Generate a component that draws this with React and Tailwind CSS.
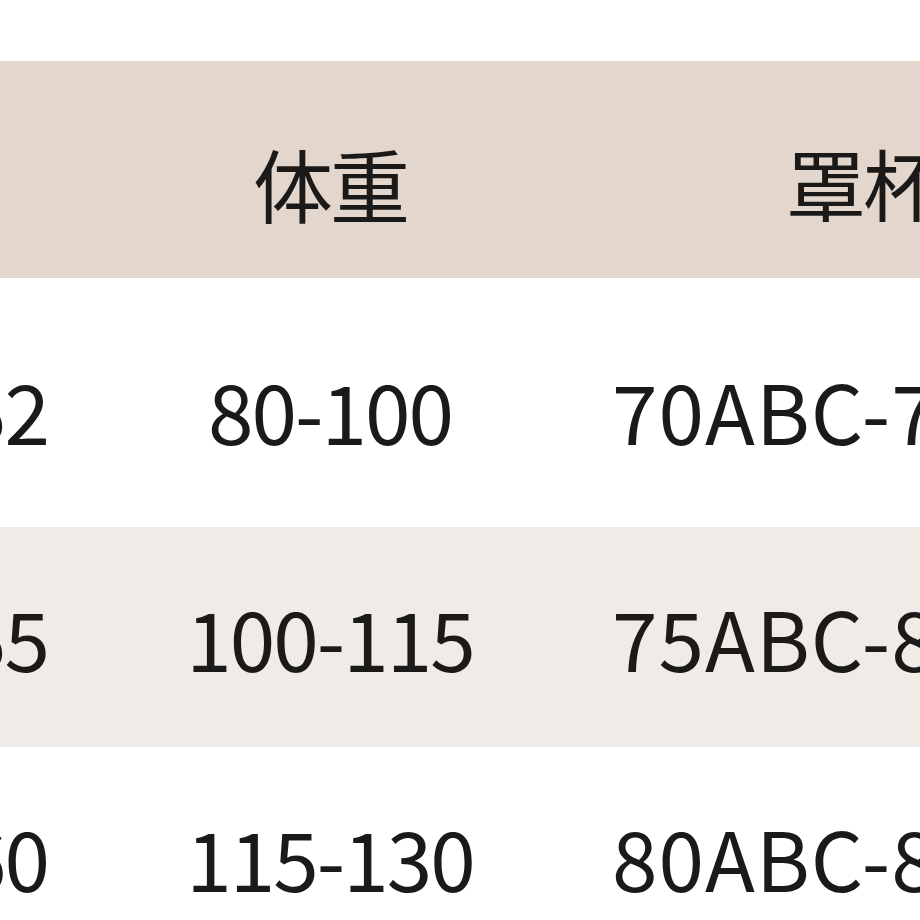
import React from 'react';

const rows = [
  { height: '150-152', weight: '80-100', cup: '70ABC-75ABC', bg: 'bg-white', h: 'h-[249px]', pt: 'pt-[14px]' },
  { height: '153-155', weight: '100-115', cup: '75ABC-80ABC', bg: 'bg-[#efebe7]', h: 'h-[220px]', pt: 'pt-[0px]' },
  { height: '156-160', weight: '115-130', cup: '80ABC-85ABC', bg: 'bg-white', h: 'h-[220px]', pt: 'pt-[0px]' },
];

const font = { fontFamily: '"Noto Sans CJK SC", "Noto Sans", sans-serif' };

export default function App() {
  return (
    <div className="w-[920px] h-[920px] overflow-hidden bg-white text-[#1b1a19]" style={font}>
      {/* top margin */}
      <div className="h-[61px] bg-white" />

      {/* Header */}
      <div className="h-[217px] bg-[#e3d7cd] flex items-center pt-[24px] text-[80px] font-normal leading-none whitespace-nowrap">
        <div className="w-[140px] shrink-0" />
        <div className="w-[380px] shrink-0 text-center tracking-[-3px]">体重</div>
        <div className="flex-1 pl-[266px] overflow-hidden tracking-[-3px]">罩杯</div>
      </div>

      {/* Body */}
      {rows.map((r) => (
        <div
          key={r.weight}
          className={`${r.bg} ${r.h} ${r.pt} flex items-center text-[82px] leading-none whitespace-nowrap tracking-[-2px]`}
        >
          <div className="w-[140px] shrink-0 overflow-hidden flex justify-end pr-[92px]">
            <span>{r.height}</span>
          </div>
          <div className="w-[380px] shrink-0 text-center">{r.weight}</div>
          <div className="flex-1 overflow-hidden pl-[92px] tracking-[1px]">{r.cup}</div>
        </div>
      ))}
    </div>
  );
}
